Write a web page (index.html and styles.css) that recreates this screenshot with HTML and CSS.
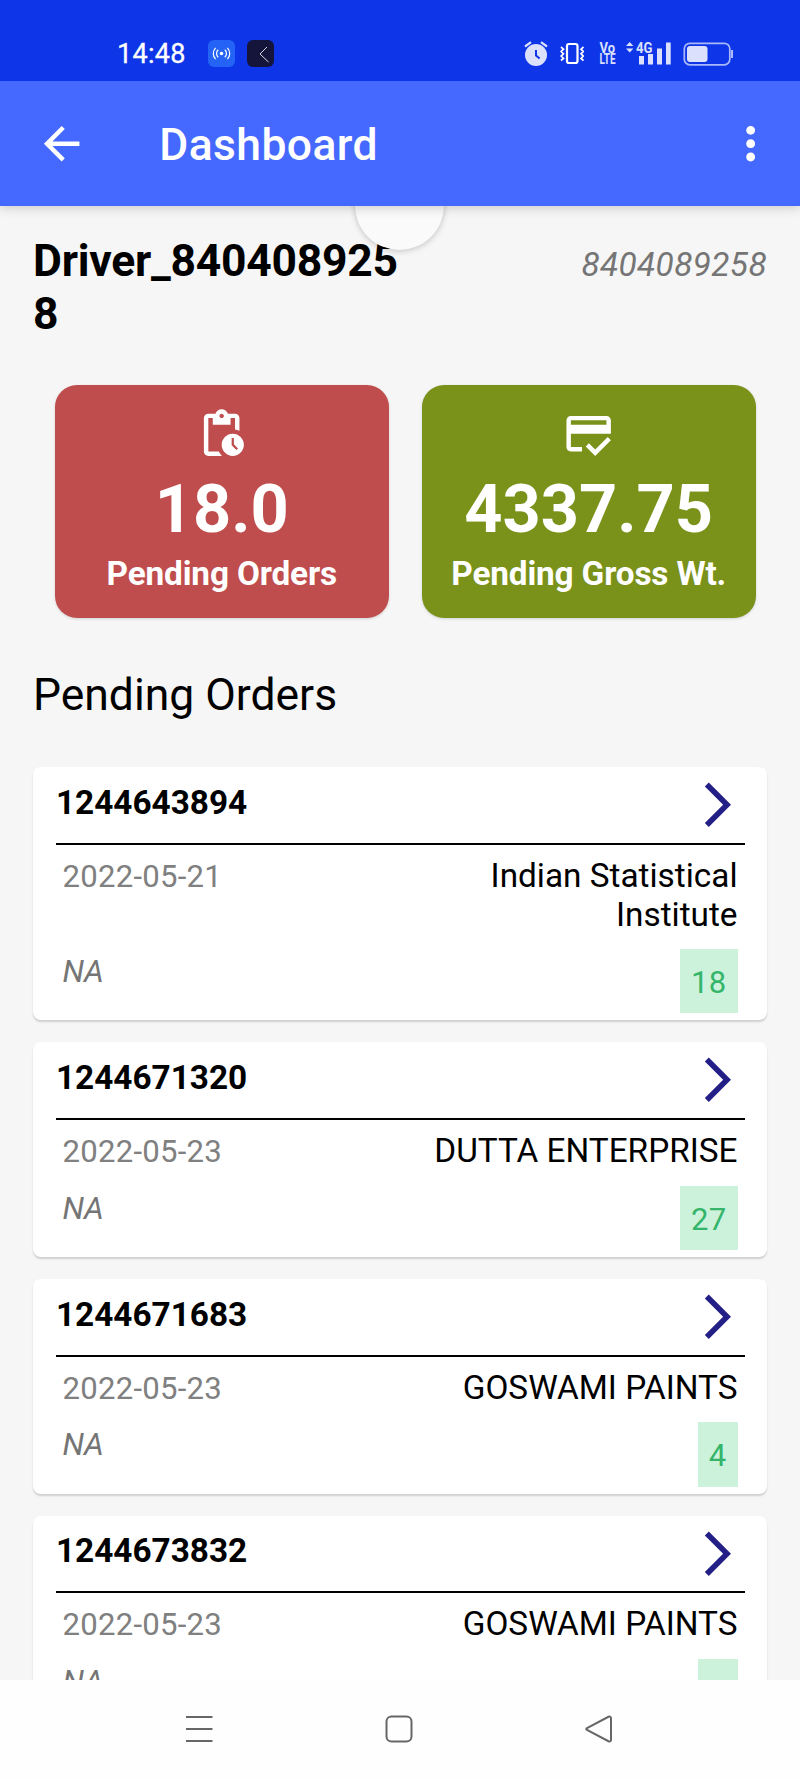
FILE: index.html
```html
<!DOCTYPE html>
<html lang="en">
<head>
  <meta charset="UTF-8">
  <meta name="viewport" content="width=device-width, initial-scale=1.0">
  <title>Dashboard</title>
  <link rel="stylesheet" href="styles.css">
</head>
<body>
  <div class="status-bar">
    <span class="clock">14:48</span>
    <svg class="app-icon" viewBox="0 0 27 27">
      <rect width="27" height="27" rx="6" fill="#2463f5"/>
      <circle cx="13.5" cy="13.5" r="1.8" fill="#fff"/>
      <path d="M10.2 9.8a5 5 0 0 0 0 7.4M16.8 9.8a5 5 0 0 1 0 7.4M7.6 7.8a8.2 8.2 0 0 0 0 11.4M19.4 7.8a8.2 8.2 0 0 1 0 11.4" fill="none" stroke="#fff" stroke-width="1.2"/>
    </svg>
    <svg class="app-icon" viewBox="0 0 27 27">
      <rect width="27" height="27" rx="6" fill="#15143a"/>
      <path d="M20 7l-7 7 8.5 8" fill="none" stroke="#d8d8e4" stroke-width="1"/>
    </svg>

    <div class="indicators">
      <svg width="24" height="25" viewBox="0 0 24 25">
        <circle cx="12" cy="14" r="11" fill="#dbe1fc"/>
        <path d="M1 5.5l6-4.3M23 5.5l-6-4.3" stroke="#dbe1fc" stroke-width="2.2"/>
        <path d="M12 9v5.5l3.6 3" fill="none" stroke="#0e36e8" stroke-width="2"/>
      </svg>
      <svg width="24" height="25" viewBox="0 0 24 25">
        <rect x="7" y="3" width="10.5" height="19" rx="2" fill="none" stroke="#fff" stroke-width="2.2"/>
        <path d="M1 6l2.5 2.2-2.3 2.3 2.3 2.3-2.3 2.3 2.3 2.3L1 19.5M23.5 6L21 8.2l2.3 2.3-2.3 2.3 2.3 2.3-2.3 2.3 2.5 2.1" fill="none" stroke="#fff" stroke-width="1.7"/>
      </svg>
      <svg class="volte" width="17" height="25" viewBox="0 0 17 25">
        <text x="0.5" y="11.5" textLength="15.5" lengthAdjust="spacingAndGlyphs">Vo</text>
        <text x="0.5" y="23" textLength="16" lengthAdjust="spacingAndGlyphs">LTE</text>
      </svg>
      <svg class="signal" width="45" height="25" viewBox="0 0 45 25">
        <path d="M0 5L3.7 1l3.7 4zM0 7.500h7.4L3.700 11.500z"/>
        <text x="10" y="11.5" textLength="16.5" lengthAdjust="spacingAndGlyphs">4G</text>
        <path d="M13 15h5v8.500h-5zM22 13h5v10.500h-5zM31 7.500h5v16h-5zM40 1.500h4.700v22H40z"/>
      </svg>
      <svg width="51" height="25" viewBox="0 0 51 25">
        <rect x="1.3" y="2.3" width="45.5" height="21.5" rx="5.5" fill="none" stroke="#a9b8f8" stroke-width="1.7"/>
        <rect x="4" y="5" width="20.5" height="16" rx="3" fill="#dbe1fc"/>
        <path d="M49 9v8" stroke="#a9b8f8" stroke-width="2"/>
      </svg>
    </div>
  </div>

  <header class="app-bar">
    <svg class="icon" viewBox="0 0 24 24"><path d="M20 11H7.830l5.590-5.590L12 4l-8 8 8 8 1.410-1.410L7.830 13H20v-2z"/></svg>
    <h1>Dashboard</h1>
    <svg class="icon" viewBox="0 0 24 24"><path d="M12 8c1.100 0 2-.9 2-2s-.9-2-2-2-2 .9-2 2 .9 2 2 2zm0 2c-1.100 0-2 .9-2 2s.9 2 2 2 2-.9 2-2-.9-2-2-2zm0 6c-1.100 0-2 .9-2 2s.9 2 2 2 2-.9 2-2-.9-2-2-2z"/></svg>
  </header>

  <main class="content">
    <div class="refresh-spinner"></div>

    <div class="driver">
      <div class="driver-name">Driver_8404089258</div>
      <div class="driver-phone">8404089258</div>
    </div>

    <div class="stats">
      <div class="stat stat-orders">
        <svg class="icon" viewBox="0 0 24 24"><path d="M17 12c-2.760 0-5 2.240-5 5s2.240 5 5 5 5-2.240 5-5-2.240-5-5-5zm1.650 7.350L16.500 17.200V14h1v2.790l1.850 1.850-.7.710zM18 3h-3.180C14.400 1.840 13.300 1 12 1s-2.400.84-2.820 2H6c-1.100 0-2 .9-2 2v15c0 1.100.9 2 2 2h6.110c-.59-.57-1.070-1.250-1.420-2H6V5h2v3h8V5h2v5.080c.71.1 1.380.31 2 .6V5c0-1.100-.9-2-2-2zm-6 2c-.55 0-1-.45-1-1s.45-1 1-1 1 .45 1 1-.45 1-1 1z"/></svg>
        <div class="stat-value">18.0</div>
        <div class="stat-label">Pending Orders</div>
      </div>
      <div class="stat stat-weight">
        <svg class="icon" viewBox="0 0 24 24"><path d="M20 4H4c-1.110 0-1.990.89-1.990 2L2 18c0 1.110.89 2 2 2h5v-2H4v-6h18V6c0-1.110-.89-2-2-2zm0 4H4V6h16v2zM14.930 19.170l-2.830-2.830-1.410 1.410L14.930 22 22 14.930l-1.410-1.410z"/></svg>
        <div class="stat-value">4337.75</div>
        <div class="stat-label">Pending Gross Wt.</div>
      </div>
    </div>

    <h2>Pending Orders</h2>

    <div class="orders">
      <div class="order">
        <div class="order-header">
          <span class="order-id">1244643894</span>
          <svg class="chevron" viewBox="0 0 24 24"><path d="M6.230 20.230L8 22l10-10L8 2 6.230 3.770 14.460 12z"/></svg>
        </div>
        <div class="order-body">
          <span class="order-date">2022-05-21</span>
          <span class="order-customer">Indian Statistical Institute</span>
          <span class="order-note">NA</span>
          <span class="order-count">18</span>
        </div>
      </div>

      <div class="order">
        <div class="order-header">
          <span class="order-id">1244671320</span>
          <svg class="chevron" viewBox="0 0 24 24"><path d="M6.230 20.230L8 22l10-10L8 2 6.230 3.770 14.460 12z"/></svg>
        </div>
        <div class="order-body">
          <span class="order-date">2022-05-23</span>
          <span class="order-customer">DUTTA ENTERPRISE</span>
          <span class="order-note">NA</span>
          <span class="order-count">27</span>
        </div>
      </div>

      <div class="order">
        <div class="order-header">
          <span class="order-id">1244671683</span>
          <svg class="chevron" viewBox="0 0 24 24"><path d="M6.230 20.230L8 22l10-10L8 2 6.230 3.770 14.460 12z"/></svg>
        </div>
        <div class="order-body">
          <span class="order-date">2022-05-23</span>
          <span class="order-customer">GOSWAMI PAINTS</span>
          <span class="order-note">NA</span>
          <span class="order-count">4</span>
        </div>
      </div>

      <div class="order">
        <div class="order-header">
          <span class="order-id">1244673832</span>
          <svg class="chevron" viewBox="0 0 24 24"><path d="M6.230 20.230L8 22l10-10L8 2 6.230 3.770 14.460 12z"/></svg>
        </div>
        <div class="order-body">
          <span class="order-date">2022-05-23</span>
          <span class="order-customer">GOSWAMI PAINTS</span>
          <span class="order-note">NA</span>
          <span class="order-count">4</span>
        </div>
      </div>
    </div>
  </main>

  <nav class="nav-bar">
    <svg viewBox="0 0 28 28"><path d="M1 2h26.500M1 14h26.500M1 26h26.500"/></svg>
    <svg viewBox="0 0 28 28"><rect x="1.5" y="1.5" width="25" height="25" rx="5"/></svg>
    <svg viewBox="0 0 28 28"><path d="M2 13Q.6 14 2 15L23.500 26.200Q26 27 26 24.800V3.200Q26 1 23.500 1.800z"/></svg>
  </nav>
</body>
</html>
```
FILE: styles.css
```css
* {
  margin: 0;
  padding: 0;
  box-sizing: border-box;
}

body {
  font-family: Roboto, "Noto Sans", sans-serif;
  background: #f6f6f6;
  color: #000;
  width: 800px;
  height: 1778px;
  display: flex;
  flex-direction: column;
  overflow: hidden;
}

svg {
  display: block;
  flex: none;
}

/* System status bar */
.status-bar {
  height: 81px;
  flex: none;
  display: flex;
  align-items: center;
  padding: 26px 66px 0 117px;
  background: #0e36e8;
  color: #fff;
  position: relative;
  z-index: 3;
}

.clock {
  width: 91px;
  font-size: 27px;
  letter-spacing: 0.3px;
  line-height: 32px;
  -webkit-text-stroke: 0.3px #fff;
}

.app-icon {
  width: 27px;
  height: 27px;
  margin-right: 12px;
}

.indicators {
  display: flex;
  margin-left: auto;
  gap: 12px;
}

.volte,
.signal {
  fill: #dbe1fc;
  font-size: 14px;
  font-weight: 700;
  overflow: visible;
}

.volte {
  margin-left: 3px;
}

.signal {
  margin-left: -2px;
}

/* App bar */
.app-bar {
  height: 125px;
  flex: none;
  display: flex;
  align-items: center;
  padding: 0 23px 0 35px;
  background: #4569ff;
  color: #fff;
  position: relative;
  z-index: 2;
  box-shadow: 0 2px 10px rgba(0, 0, 0, 0.18);
}

.app-bar h1 {
  flex: 1;
  margin-left: 71px;
  padding-top: 3px;
  font-size: 44.44px;
  font-weight: 500;
  letter-spacing: 0.4px;
}

.icon {
  width: 53.33px;
  height: 53.33px;
  fill: currentColor;
}

/* Page content */
.content {
  flex: 1;
  min-height: 0;
  overflow: hidden;
  position: relative;
  padding: 28px 33px 0;
}

.refresh-spinner {
  position: absolute;
  top: -45px;
  left: 355px;
  width: 89px;
  height: 89px;
  border-radius: 50%;
  background: #fafafa;
  box-shadow: 0 1px 6px rgba(0, 0, 0, 0.22);
}

.driver {
  display: flex;
  justify-content: space-between;
  margin-bottom: 46px;
}

.driver-name {
  width: 368px;
  padding-top: 1px;
  margin-bottom: -1px;
  font-size: 44.44px;
  font-weight: 700;
  letter-spacing: -0.25px;
  line-height: 52.5px;
  overflow-wrap: anywhere;
}

.driver-phone {
  padding-top: 11px;
  font-size: 33.33px;
  font-style: italic;
  letter-spacing: 0.4px;
  line-height: 39px;
  color: #757575;
}

.stats {
  display: grid;
  grid-template-columns: 1fr 1fr;
  gap: 33.33px;
  padding: 0 11.5px 0 22px;
}

.stat {
  height: 233px;
  padding-top: 22px;
  display: flex;
  flex-direction: column;
  align-items: center;
  border-radius: 22px;
  color: #fff;
  font-weight: 700;
  box-shadow: 0 1px 3px rgba(0, 0, 0, 0.15);
}

.stat-orders {
  background: #bf4d4d;
}

.stat-weight {
  background: #7a911a;
}

.stat-value {
  margin-top: 9.5px;
  font-size: 66.67px;
  line-height: 78px;
}

.stat-label {
  margin-top: 6.5px;
  font-size: 33.33px;
  letter-spacing: -0.15px;
  line-height: 39px;
}

h2 {
  margin: 51px 0 46px;
  font-size: 44.44px;
  font-weight: 400;
  line-height: 52px;
}

/* Order list */
.orders {
  display: flex;
  flex-direction: column;
  gap: 22.2px;
}

.order {
  padding: 0 22.5px 7px;
  background: #fff;
  border-radius: 8px;
  box-shadow: 0 2px 2px rgba(0, 0, 0, 0.16);
}

.order-header {
  display: flex;
  justify-content: space-between;
  height: 77.5px;
  padding-top: 11px;
  border-bottom: 2px solid #000;
}

.order-id {
  padding: 4.5px 0 0 0.5px;
  font-size: 33.33px;
  font-weight: 700;
  line-height: 39px;
}

.chevron {
  width: 53.33px;
  height: 53.33px;
  fill: #231f86;
}

.order-body {
  display: grid;
  grid-template-columns: 1fr 1fr;
  row-gap: 15.4px;
  padding: 11px 7px 0;
}

.order-date,
.order-note,
.order-count {
  font-size: 31.11px;
  line-height: 36.5px;
}

.order-date {
  padding-top: 3px;
  letter-spacing: 0.25px;
  color: #808080;
}

.order-note {
  padding-top: 5px;
  font-style: italic;
  letter-spacing: -0.3px;
  color: #757575;
}

.order-customer {
  font-size: 33.33px;
  line-height: 39px;
  text-align: right;
}

.order-count {
  justify-self: end;
  height: 64.2px;
  padding: 16px 11px 0;
  letter-spacing: 0.25px;
  background: #ccf2dc;
  color: #35b56a;
}

/* System navigation */
.nav-bar {
  height: 98px;
  flex: none;
  display: flex;
  justify-content: center;
  gap: 172px;
  padding: 35px 2px 0 0;
  background: #fefefe;
}

.nav-bar svg {
  width: 28px;
  height: 28px;
  fill: none;
  stroke: #666;
  stroke-width: 2;
}
```
